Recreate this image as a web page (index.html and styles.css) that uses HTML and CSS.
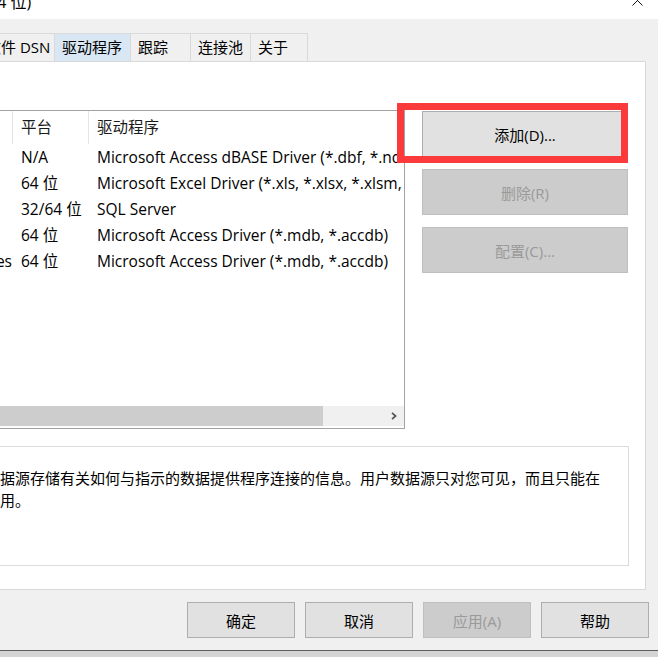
FILE: index.html
```html
<!DOCTYPE html>
<html lang="zh-CN">

<head>
    <meta charset="UTF-8" />
    <title>ODBC 数据源管理程序(64 位)</title>
    <link rel="stylesheet" href="styles.css">
</head>

<body>
    <div class="window">
        <div class="titlebar">
            <span class="title">64 位)</span>
            <svg class="close" viewBox="0 0 11 11" width="11" height="11">
                <path d="M0.5 0.5 L10.5 10.5 M10.5 0.5 L0.5 10.5" stroke="#111" stroke-width="1" fill="none" />
            </svg>
        </div>

        <div class="tabs">
            <div class="tab tab-first">文件 DSN</div>
            <div class="tab tab-hot">驱动程序</div>
            <div class="tab tab-60">跟踪</div>
            <div class="tab tab-60">连接池</div>
            <div class="tab tab-57">关于</div>
        </div>

        <div class="panel">
            <div class="upper">
                <div class="list">
                    <div class="list-head">
                        <div class="col-a"></div>
                        <div class="col-b">平台</div>
                        <div class="col-c">驱动程序</div>
                    </div>
                    <div class="list-body">
                        <div class="row">
                            <div class="col-a"></div>
                            <div class="col-b">N/A</div>
                            <div class="col-c">Microsoft Access dBASE Driver (*.dbf, *.ndx, *.mdx)</div>
                        </div>
                        <div class="row">
                            <div class="col-a"></div>
                            <div class="col-b">64 位</div>
                            <div class="col-c">Microsoft Excel Driver (*.xls, *.xlsx, *.xlsm, *.xlsb)</div>
                        </div>
                        <div class="row">
                            <div class="col-a"></div>
                            <div class="col-b">32/64 位</div>
                            <div class="col-c">SQL Server</div>
                        </div>
                        <div class="row">
                            <div class="col-a"></div>
                            <div class="col-b">64 位</div>
                            <div class="col-c">Microsoft Access Driver (*.mdb, *.accdb)</div>
                        </div>
                        <div class="row">
                            <div class="col-a"><span>es</span></div>
                            <div class="col-b">64 位</div>
                            <div class="col-c">Microsoft Access Driver (*.mdb, *.accdb)</div>
                        </div>
                    </div>
                    <div class="hscroll">
                        <div class="thumb"></div>
                        <div class="track"></div>
                        <div class="arrow">
                            <svg viewBox="0 0 6 8" width="6" height="8">
                                <polyline points="1,0.8 4.6,4 1,7.2" stroke="#555" stroke-width="1.7" fill="none" />
                            </svg>
                        </div>
                    </div>
                </div>

                <div class="side">
                    <div class="add-wrap">
                        <button type="button" class="btn">添加(D)...</button>
                    </div>
                    <button type="button" class="btn" disabled>删除(R)</button>
                    <button type="button" class="btn" disabled>配置(C)...</button>
                </div>
            </div>

            <div class="desc">
                据源存储有关如何与指示的数据提供程序连接的信息。用户数据源只对您可见，而且只能在<br>用。
            </div>
        </div>

        <div class="footer">
            <button type="button" class="btn fbtn">确定</button>
            <button type="button" class="btn fbtn">取消</button>
            <button type="button" class="btn fbtn" disabled>应用(A)</button>
            <button type="button" class="btn fbtn">帮助</button>
        </div>
    </div>
</body>

</html>
```

FILE: styles.css
```css
*,
*::before,
*::after {
    box-sizing: border-box;
}

body {
    margin: 0;
    background: #d4d4d4;
    font-family: "Open Sans", "Noto Sans CJK SC", sans-serif;
    font-size: 15px;
    color: #000;
    overflow: hidden;
}

.window {
    width: 658px;
    height: 651px;
    background: #f0f0f0;
    border-bottom: 1px solid #5e5e5e;
    overflow: hidden;
}

.titlebar {
    height: 19px;
    background: #fff;
    display: flex;
    justify-content: space-between;
    overflow: hidden;
}

.title {
    margin-top: -8px;
    margin-left: -12px;
    line-height: 20px;
    font-size: 16px;
    white-space: nowrap;
}

.close {
    flex: none;
    margin-top: -5px;
    margin-right: 15px;
}

.tabs {
    display: flex;
    margin-top: 14px;
    height: 28px;
}

.tab {
    height: 28px;
    border: 1px solid #d9d9d9;
    border-left: none;
    border-bottom: none;
    padding-left: 7px;
    line-height: 26px;
    white-space: nowrap;
    background: #f0f0f0;
}

.tab-first {
    margin-left: -22px;
    width: 77px;
    border-left: 1px solid #d9d9d9;
}

.tab-hot {
    width: 76px;
    background: #d9e7f5;
}

.tab-60 {
    width: 60px;
}

.tab-57 {
    width: 57px;
}

.panel {
    margin-left: -1px;
    width: 647px;
    height: 529px;
    background: #fff;
    border: 1px solid #d9d9d9;
    padding-top: 48px;
}

.upper {
    display: flex;
    align-items: flex-start;
}

.list {
    margin-left: -1px;
    width: 406px;
    height: 319px;
    border: 1px solid #a3a3a3;
    display: flex;
    flex-direction: column;
    font-size: 15.5px;
}

.list-head {
    display: flex;
    height: 33px;
    line-height: 33px;
    flex: none;
    color: #1a1a1a;
}

.list-head .col-a,
.list-head .col-b {
    border-right: 1px solid #e5e5e5;
}

.list-body {
    flex: 1;
}

.row {
    display: flex;
    height: 26px;
    line-height: 26px;
}

.col-a {
    width: 13px;
    flex: none;
    display: flex;
    justify-content: flex-end;
    padding-right: 1px;
    white-space: nowrap;
}

.col-b {
    width: 76px;
    flex: none;
    padding-left: 8px;
    white-space: nowrap;
}

.col-c {
    flex: 1;
    min-width: 0;
    overflow: hidden;
    padding-left: 8px;
    white-space: nowrap;
}

.hscroll {
    display: flex;
    height: 20px;
    flex: none;
    margin-bottom: 2px;
    background: #f0f0f0;
}

.thumb {
    width: 323px;
    background: #cdcdcd;
}

.track {
    flex: 1;
}

.arrow {
    width: 20px;
    display: flex;
    align-items: center;
    justify-content: center;
}

.side {
    display: flex;
    flex-direction: column;
    gap: 12px;
    margin-left: 17px;
    margin-top: 1px;
}

.btn {
    width: 206px;
    height: 46px;
    margin: 0;
    padding: 0;
    background: #e1e1e1;
    border: 1px solid #adadad;
    font-family: inherit;
    font-size: 15px;
    color: #000;
}

.btn:disabled {
    background: #cccccc;
    border-color: #bfbfbf;
    color: #9a9a9a;
}

.add-wrap {
    position: relative;
    display: flex;
}

/* red marker drawn over the add button */
.add-wrap::after {
    content: "";
    position: absolute;
    left: -25px;
    top: -8px;
    width: 231px;
    height: 60px;
    border: 7px solid #fb3b3b;
}

.desc {
    margin-top: 17px;
    margin-left: -1px;
    width: 630px;
    height: 120px;
    border: 1px solid #dcdcdc;
    padding-top: 20px;
    line-height: 22px;
    font-size: 15px;
    white-space: nowrap;
    overflow: hidden;
}

.footer {
    display: flex;
    justify-content: flex-end;
    gap: 10px;
    padding-right: 9px;
    margin-top: 12px;
}

.fbtn {
    width: 108px;
    height: 36px;
}
```
